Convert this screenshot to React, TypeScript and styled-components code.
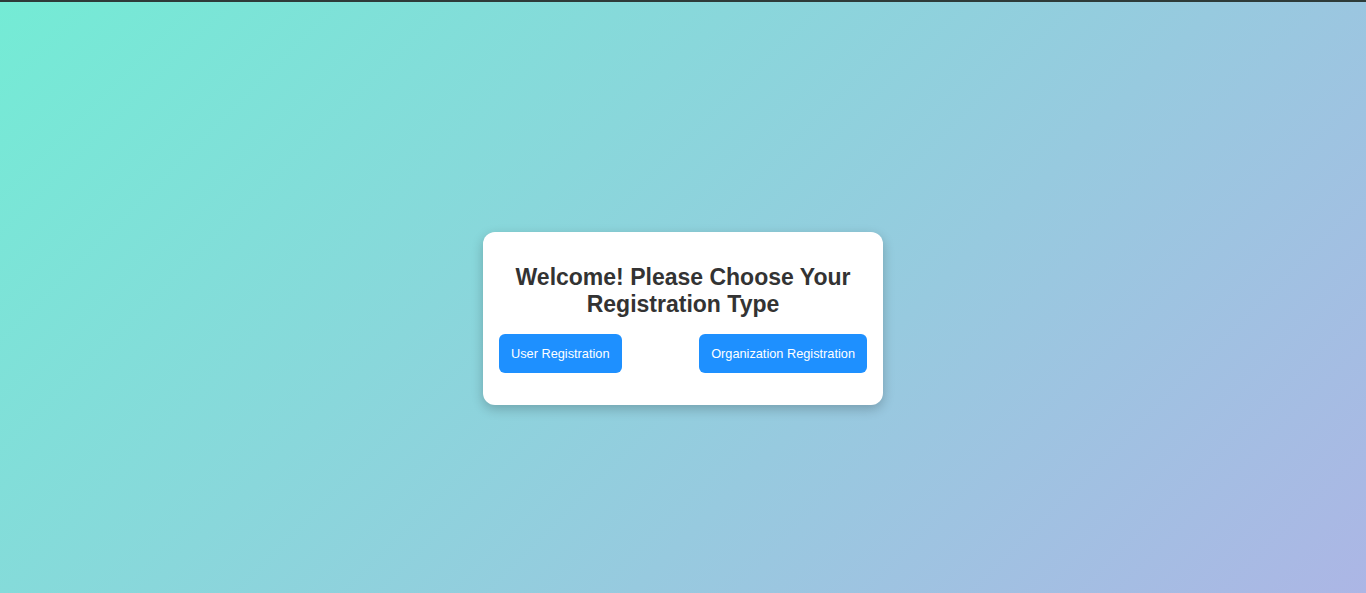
import styled, { createGlobalStyle } from 'styled-components'

const GlobalStyle = createGlobalStyle`
	* {
		box-sizing: border-box;
	}
	html, body {
		margin: 0;
		padding: 0;
	}
	body {
		font-family: 'Liberation Sans', Arial, sans-serif;
	}
`

const Page = styled.div`
	min-height: 100vh;
	border-top: 2px solid #2e3b39;
	background: linear-gradient(135deg, #74ebd5 0%, #acb6e5 100%);
	display: flex;
	align-items: center;
	justify-content: center;
	padding-top: 42px;
`

const Card = styled.div`
	width: 400px;
	background: #fff;
	border-radius: 12px;
	padding: 32px 16px 32px;
	box-shadow: 0 4px 12px rgba(0, 0, 0, 0.22);
	text-align: center;
`

const Title = styled.h2`
	margin: 0 0 16px;
	font-size: 23px;
	font-weight: 700;
	color: #333;
	line-height: 27px;
`

const Actions = styled.div`
	display: flex;
	justify-content: space-between;
	align-items: center;
`

const Button = styled.button`
	border: none;
	border-radius: 6px;
	background: #1e90ff;
	color: #fff;
	font-family: 'Liberation Sans', Arial, sans-serif;
	font-size: 12.75px;
	font-weight: 500;
	line-height: 15px;
	padding: 12px;
	cursor: pointer;
`

export default function App() {
	return (
		<>
			<GlobalStyle />
			<Page>
				<Card>
					<Title>Welcome! Please Choose Your Registration Type</Title>
					<Actions>
						<Button>User Registration</Button>
						<Button>Organization Registration</Button>
					</Actions>
				</Card>
			</Page>
		</>
	)
}
